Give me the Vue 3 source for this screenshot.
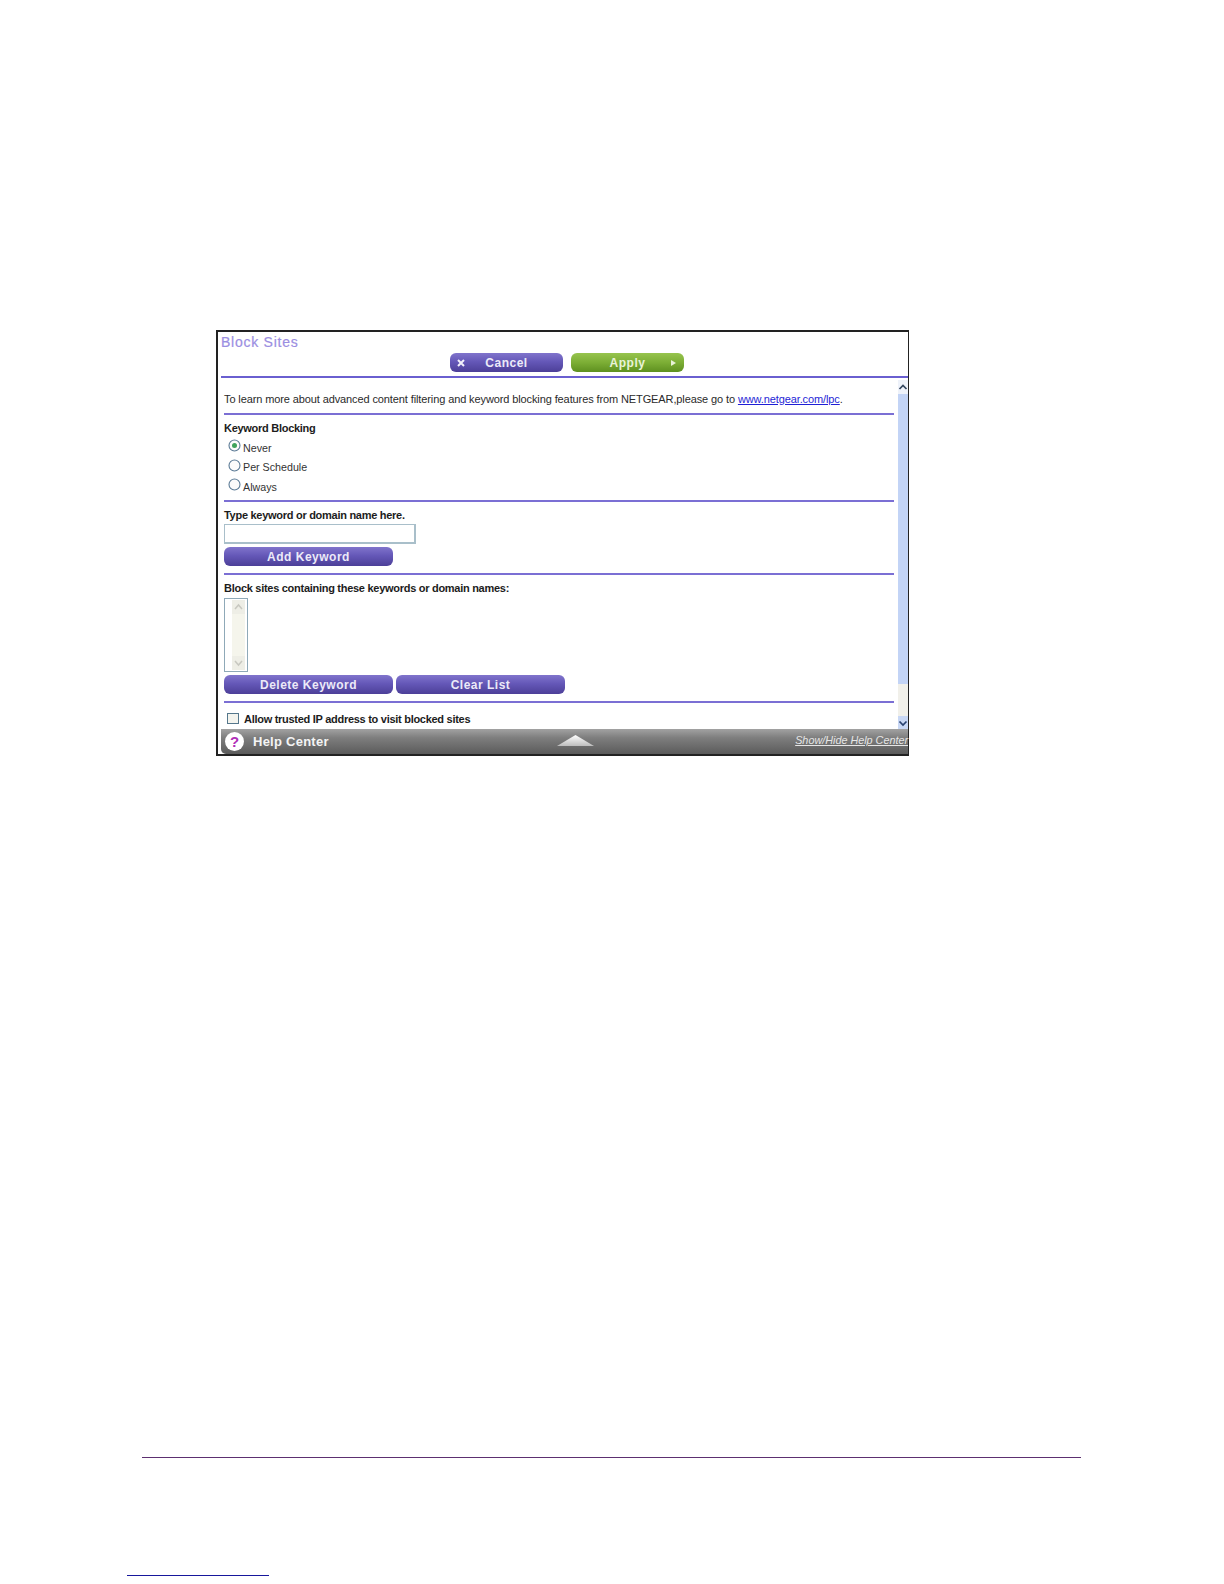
<script setup>
const radios = [
  { label: 'Never', on: true },
  { label: 'Per Schedule', on: false },
  { label: 'Always', on: false }
]
</script>

<template>
  <div class="page">
    <div class="frame">
      <header class="head">
        <div class="title">Block Sites</div>
        <div class="actions">
          <div class="btn btn-cancel">
            <svg class="ico-x" viewBox="0 0 8 8" width="8" height="8"><path d="M1 1l6 6M7 1l-6 6" stroke="#f2f0fb" stroke-width="2"/></svg>
            <span>Cancel</span>
          </div>
          <div class="btn btn-apply">
            <span>Apply</span>
            <svg class="ico-play" viewBox="0 0 6 8" width="6" height="8"><path d="M0 1l5 3-5 3z" fill="#e8f2d6"/></svg>
          </div>
        </div>
      </header>

      <div class="main">
        <div class="content">
          <section class="sec sec-intro">
            To learn more about advanced content filtering and keyword blocking features from NETGEAR,please go to <a class="link">www.netgear.com/lpc</a>.
          </section>

          <section class="sec sec-radio">
            <div class="label">Keyword Blocking</div>
            <div v-for="r in radios" :key="r.label" class="radio-row">
              <svg viewBox="0 0 13 13" width="13" height="13">
                <circle cx="6.5" cy="6.5" r="5.5" fill="#fbfbfb" stroke="#5d7c97" stroke-width="1.1"/>
                <circle v-if="r.on" cx="6.5" cy="6.5" r="2.5" fill="#3fa35c"/>
              </svg>
              <span>{{ r.label }}</span>
            </div>
          </section>

          <section class="sec sec-type">
            <div class="label">Type keyword or domain name here.</div>
            <div class="input"></div>
            <div class="btn btn-wide">Add Keyword</div>
          </section>

          <section class="sec sec-list">
            <div class="label">Block sites containing these keywords or domain names:</div>
            <div class="listbox">
              <div class="lb-bar">
                <div class="lb-cell">
                  <svg viewBox="0 0 11 12" width="11" height="12"><path d="M2 8l3.5-4L9 8" fill="none" stroke="#c8c8c0" stroke-width="1.5"/></svg>
                </div>
                <div class="lb-cell">
                  <svg viewBox="0 0 11 12" width="11" height="12"><path d="M2 4l3.5 4L9 4" fill="none" stroke="#c8c8c0" stroke-width="1.5"/></svg>
                </div>
              </div>
            </div>
            <div class="btn-row">
              <div class="btn btn-wide">Delete Keyword</div>
              <div class="btn btn-wide">Clear List</div>
            </div>
          </section>

          <section class="sec sec-check">
            <div class="check"></div>
            <span class="label">Allow trusted IP address to visit blocked sites</span>
          </section>
        </div>

        <div class="scrollbar">
          <div class="sb-up">
            <svg viewBox="0 0 10 10" width="10" height="10"><path d="M1.5 7L5 3.5 8.500 7" fill="none" stroke="#33465f" stroke-width="1.700"/></svg>
          </div>
          <div class="sb-thumb"></div>
          <div class="sb-track"></div>
          <div class="sb-down">
            <svg viewBox="0 0 10 10" width="10" height="10"><path d="M1.500 3.500L5 7l3.500-3.500" fill="none" stroke="#27406f" stroke-width="1.700"/></svg>
          </div>
        </div>
      </div>

      <footer class="foot">
        <div class="help-ico">?</div>
        <div class="help-txt">Help Center</div>
        <svg class="tri" viewBox="0 0 37 11" width="37" height="11">
          <defs>
            <linearGradient id="triG" x1="0" y1="0" x2="0" y2="1">
              <stop offset="0" stop-color="#ffffff"/>
              <stop offset="1" stop-color="#bdbdbd"/>
            </linearGradient>
          </defs>
          <path d="M18.500 0L37 11H0z" fill="url(#triG)"/>
        </svg>
        <a class="toggle">Show/Hide Help Center</a>
      </footer>
    </div>

    <div class="rule-purple"></div>
    <div class="rule-blue"></div>
  </div>
</template>

<style scoped>
.page {
  width: 1224px;
  height: 1584px;
  background: #fff;
  padding-top: 330px;
  box-sizing: border-box;
  font-family: "Liberation Sans", Arial, sans-serif;
  overflow: hidden;
}
.frame {
  width: 693px;
  height: 426px;
  margin-left: 216px;
  border: 2px solid #222;
  border-right-width: 1px;
  box-sizing: border-box;
  display: flex;
  flex-direction: column;
  padding-left: 3px;
  background: #fff;
}
.head {
  height: 46px;
  flex: none;
  border-bottom: 2px solid #6a5fd0;
  box-sizing: border-box;
}
.title {
  height: 21px;
  line-height: 21px;
  font-size: 14px;
  letter-spacing: 0.75px;
  color: #9b8ee2;
  -webkit-text-stroke: 0.2px #9b8ee2;
}
.actions {
  display: flex;
  gap: 8px;
  margin-left: 229px;
}
.btn {
  display: flex;
  align-items: center;
  justify-content: center;
  height: 19px;
  border-radius: 6px;
  color: #eceaf8;
  font-size: 12px;
  font-weight: 700;
  letter-spacing: 0.5px;
  background: linear-gradient(#8074cc, #6558b8 45%, #4c3f98);
  box-sizing: border-box;
}
.btn-cancel {
  width: 113px;
  position: relative;
}
.ico-x {
  position: absolute;
  left: 7px;
  top: 6px;
}
.btn-apply {
  width: 113px;
  position: relative;
  color: #e9f3d8;
  background: linear-gradient(#97c44e, #7cae35 50%, #5e9020);
}
.ico-play {
  position: absolute;
  right: 7px;
  top: 6px;
}
.main {
  flex: 1;
  min-height: 0;
  display: flex;
}
.content {
  flex: 1;
  min-width: 0;
  padding: 0 4px 0 3px;
  overflow: hidden;
}
.sec {
  box-sizing: border-box;
  color: #222;
  font-size: 11px;
  border-bottom: 2px solid #7b6fd4;
}
.label {
  font-size: 11px;
  font-weight: 700;
  letter-spacing: -0.28px;
  color: #1c1c1c;
  line-height: 14px;
}
.sec-intro {
  height: 37px;
  padding-top: 14px;
  line-height: 14px;
  white-space: nowrap;
  font-size: 11px;
  letter-spacing: -0.11px;
  color: #2a2a2a;
}
.link {
  color: #1f1fd6;
  text-decoration: underline;
}
.sec-radio {
  height: 87px;
  padding-top: 6px;
}
.radio-row {
  display: flex;
  align-items: center;
  gap: 2px;
  height: 19.500px;
  padding-left: 4px;
  color: #333;
  font-size: 10.700px;
}
.radio-row svg {
  position: relative;
  top: -2px;
}
.label + .radio-row {
  margin-top: 3px;
}
.sec-type {
  height: 73px;
  padding-top: 6px;
}
.input {
  width: 192px;
  height: 20px;
  margin-top: 2px;
  box-sizing: border-box;
  border: 1px solid #a9bfca;
  border-right-width: 2px;
  border-bottom-width: 2px;
  background: #fff;
}
.btn-wide {
  width: 169px;
  margin-top: 3px;
}
.sec-list {
  height: 128px;
  padding-top: 6px;
}
.listbox {
  width: 24px;
  height: 74px;
  margin-top: 3px;
  box-sizing: border-box;
  border: 1px solid #8fa9b8;
  background: #fff;
  padding: 1px 2px 1px 7px;
}
.lb-bar {
  width: 13px;
  height: 100%;
  background: #f5f5ec;
  display: flex;
  flex-direction: column;
  justify-content: space-between;
  align-items: center;
}
.lb-cell {
  width: 13px;
  height: 14px;
  background: #eeeee6;
  display: flex;
  align-items: center;
  justify-content: center;
}
.btn-row {
  display: flex;
  gap: 3px;
}
.sec-check {
  border-bottom: 0;
  padding-top: 9px;
  display: flex;
  align-items: flex-start;
  gap: 5px;
  padding-left: 3px;
  white-space: nowrap;
}
.check {
  width: 12px;
  height: 11px;
  margin-top: 1px;
  box-sizing: border-box;
  border: 1px solid #55778c;
  background: #f4f4ee;
}
.scrollbar {
  width: 10px;
  flex: none;
  display: flex;
  flex-direction: column;
}
.sb-up {
  height: 14px;
  margin-top: 2px;
  background: #eef2fa;
  display: flex;
  align-items: center;
  justify-content: center;
}
.sb-thumb {
  height: 290px;
  background: #c3d4f6;
}
.sb-track {
  flex: 1;
  background: #f1f0ea;
}
.sb-down {
  height: 13px;
  background: #c9d8f5;
  display: flex;
  align-items: center;
  justify-content: center;
}
.foot {
  flex: none;
  height: 25px;
  position: relative;
  display: flex;
  align-items: center;
  background: linear-gradient(#a2a2a2, #7e7e7e 35%, #5b5b5b);
  border-radius: 0 0 0 5px;
}
.help-ico {
  width: 19px;
  height: 19px;
  margin-left: 4px;
  border-radius: 50%;
  background: #fff;
  color: #b02fb8;
  font-size: 15px;
  font-weight: 700;
  line-height: 19px;
  text-align: center;
  flex: none;
}
.help-txt {
  margin-left: 9px;
  color: #f4f4f4;
  font-size: 13px;
  font-weight: 700;
  letter-spacing: 0.25px;
}
.tri {
  position: absolute;
  left: 336px;
  top: 6px;
}
.toggle {
  position: absolute;
  right: 0;
  top: 5px;
  color: #e6e6e6;
  font-size: 10.800px;
  font-style: italic;
  text-decoration: underline;
  white-space: nowrap;
}
.rule-purple {
  height: 1px;
  width: 939px;
  margin-left: 142px;
  margin-top: 701px;
  background: #5c2f70;
}
.rule-blue {
  height: 1px;
  width: 142px;
  margin-left: 127px;
  margin-top: 117px;
  background: #17179c;
}
</style>
